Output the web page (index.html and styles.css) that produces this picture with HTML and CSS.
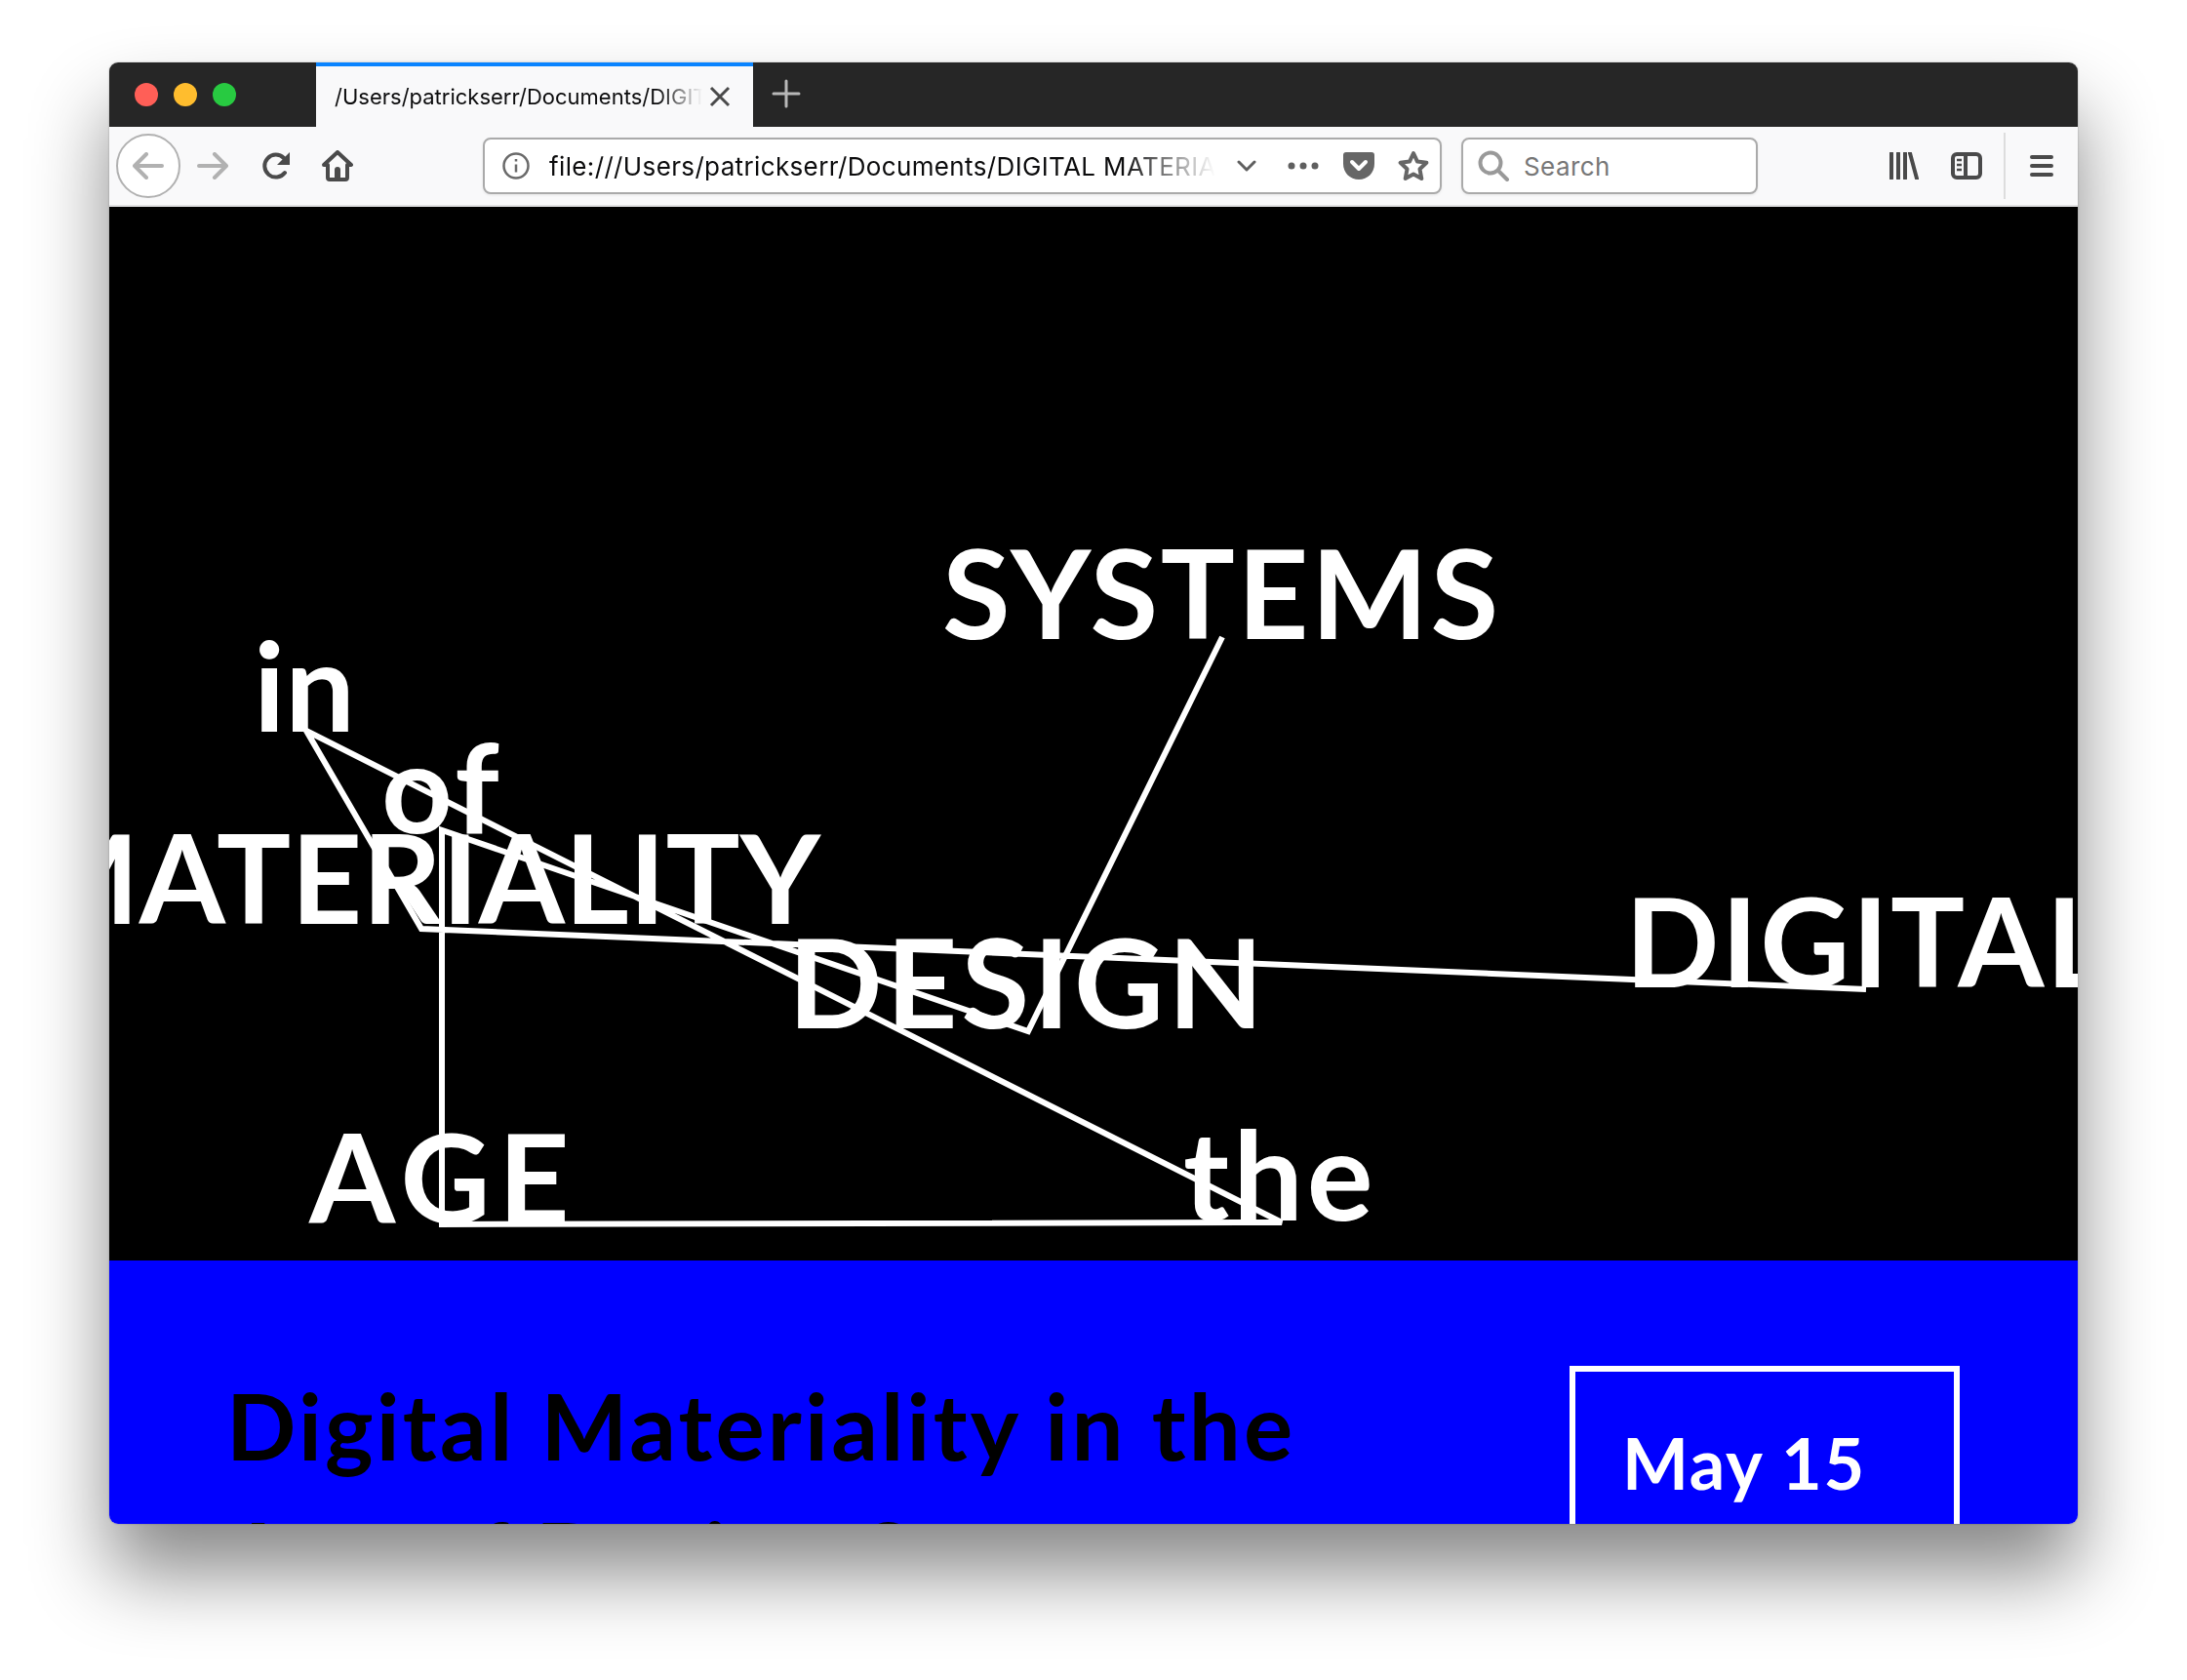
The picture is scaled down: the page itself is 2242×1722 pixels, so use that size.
FILE: index.html
```html
<!DOCTYPE html>
<html lang="en">

<head>
    <meta charset="UTF-8">
    <title>Digital Materiality in the Age of Design Systems</title>
    <link rel="stylesheet" href="styles.css">
</head>

<body>
    <div class="window">
        <div class="tabbar">
            <div class="lights">
                <span class="light red"></span>
                <span class="light yellow"></span>
                <span class="light green"></span>
            </div>
            <div class="tab">
                <span class="tab-title">/Users/patrickserr/Documents/DIGITAL MATERIALITY</span>
                <svg class="tab-close" width="24" height="24" viewBox="0 0 24 24"><path d="M3 3l18 18M21 3L3 21" /></svg>
            </div>
            <svg class="new-tab" width="30" height="30" viewBox="0 0 30 30"><path d="M15 2v26M2 15h26" /></svg>
        </div>

        <div class="toolbar">
            <div class="back">
                <svg width="32" height="28" viewBox="0 0 32 28"><path d="M30 14H3M14 2L2 14l12 12" /></svg>
            </div>
            <svg class="forward" width="32" height="28" viewBox="0 0 32 28"><path d="M2 14h27M18 2l12 12-12 12" /></svg>
            <svg class="reload" width="30" height="28" viewBox="0 0 30 28"><path d="M24 21a11.500 11.500 0 1 1-1-15l3 3" /><path class="solid" d="M29 0v13H16z" /></svg>
            <svg class="home" width="32" height="32" viewBox="0 0 32 32"><path d="M2 15L16 2l14 13h-4v13a2 2 0 0 1-2 2H8a2 2 0 0 1-2-2V15z" /><path class="solid" d="M13 30V20a3 3 0 0 1 6 0v10z" /></svg>

            <div class="urlbar">
                <svg class="info" width="28" height="28" viewBox="0 0 28 28"><circle cx="14" cy="14" r="12.5" /><path d="M14 12.5v8" /><path d="M14 7v2.6" /></svg>
                <span class="url">file:///Users/patrickserr/Documents/DIGITAL MATERIALITY/index.html</span>
                <svg class="chevron" width="20" height="12" viewBox="0 0 20 12"><path d="M2 2l8 8 8-8" /></svg>
                <svg class="dots" width="32" height="8" viewBox="0 0 32 8"><circle cx="4" cy="4" r="3.5" /><circle cx="16" cy="4" r="3.5" /><circle cx="28" cy="4" r="3.5" /></svg>
                <svg class="pocket" width="32" height="28" viewBox="0 0 32 28"><path class="solid" d="M3 0h26a3 3 0 0 1 3 3v9c0 9-7 16-16 16S0 21 0 12V3a3 3 0 0 1 3-3z" /><path d="M9 10l7 7 7-7" /></svg>
                <svg class="star" width="32" height="32" viewBox="0 0 32 32"><path d="M16 3l4 8.6 9.4 1.2-6.9 6.5 1.800 9.700-8.300-4.600-8.300 4.600 1.800-9.700-6.900-6.500 9.400-1.200z" /></svg>
            </div>

            <div class="searchbar">
                <svg class="glass" width="32" height="32" viewBox="0 0 32 32"><circle cx="13" cy="13" r="10.500" /><path d="M21 21l9 9" /></svg>
                <span class="search-text">Search</span>
            </div>

            <svg class="library" width="30" height="28" viewBox="0 0 30 28"><path d="M2 1v26M9 1v26M16 1v26M21 1l7 26" /></svg>
            <svg class="sidebar" width="32" height="28" viewBox="0 0 32 28"><rect x="2" y="2" width="28" height="24" rx="4" /><path d="M15 2v24" /><path class="thin" d="M6 8h5M6 13h5M6 18h5" /></svg>
            <span class="divider"></span>
            <svg class="menu" width="26" height="24" viewBox="0 0 26 24"><path d="M3 3h20M3 12h20M3 21h20" /></svg>
        </div>

        <div class="canvas">
            <svg class="links" width="2018" height="1080" viewBox="0 0 2018 1080">
                <polyline points="1141,441 942,845 341,639 341,1043 1202,1041 202,537 320,740 1801,802" />
            </svg>
            <span class="word word-systems">SYSTEMS</span>
            <span class="word word-in">in</span>
            <span class="word word-of">of</span>
            <span class="word word-materiality">MATERIALITY</span>
            <span class="word word-design">DESIGN</span>
            <span class="word word-digital">DIGITAL</span>
            <span class="word word-age">AGE</span>
            <span class="word word-the">the</span>
        </div>

        <div class="intro">
            <h1>Digital Materiality in the Age of Design Systems</h1>
            <div class="date">May 15</div>
        </div>
    </div>
</body>

</html>
```

FILE: styles.css
```css
* {
    box-sizing: border-box;
}

html,
body {
    margin: 0;
    height: 100%;
    overflow: hidden;
}

body {
    background-color: #fff;
    padding: 64px 112px 160px;
    font-family: "Inter", "Liberation Sans", sans-serif;
}

svg {
    display: block;
    flex: none;
    fill: none;
    stroke: #4a4a4a;
    stroke-width: 4;
    stroke-linecap: round;
    stroke-linejoin: round;
}

svg .solid {
    fill: #4a4a4a;
    stroke: none;
}

.window {
    height: 1498px;
    display: flex;
    flex-direction: column;
    overflow: hidden;
    border-radius: 9px;
    box-shadow: 0 50px 80px rgba(0, 0, 0, .47), 0 0 2px rgba(0, 0, 0, .3);
}

/* tab strip */
.tabbar {
    height: 66px;
    flex: none;
    display: flex;
    align-items: stretch;
    background-color: #262626;
}

.lights {
    width: 212px;
    display: flex;
    align-items: center;
    gap: 16px;
    padding-left: 26px;
}

.light {
    width: 24px;
    height: 24px;
    border-radius: 50%;
}

.red {
    background-color: #ff5f57;
}

.yellow {
    background-color: #ffbd2e;
}

.green {
    background-color: #28ca41;
}

.tab {
    width: 448px;
    display: flex;
    align-items: center;
    padding: 0 22px 0 19px;
    gap: 6px;
    background-color: #f9f9fa;
    border-top: 4px solid #0a84ff;
}

.tab-title {
    flex: 1;
    overflow: hidden;
    white-space: nowrap;
    font-size: 22px;
    color: #0c0c0d;
    -webkit-mask-image: linear-gradient(to right, #000 88%, transparent 100%);
    mask-image: linear-gradient(to right, #000 88%, transparent 100%);
}

.tab-close {
    stroke-width: 3;
    stroke-linecap: butt;
}

.new-tab {
    margin: 17px 0 0 19px;
    stroke: #b8b8b8;
    stroke-width: 3;
}

/* nav bar */
.toolbar {
    height: 82px;
    flex: none;
    display: flex;
    align-items: center;
    padding-left: 7px;
    background-color: #f9f9fa;
    border-bottom: 2px solid #e1e1e2;
}

.back {
    width: 66px;
    height: 66px;
    flex: none;
    display: flex;
    align-items: center;
    justify-content: center;
    background-color: #fff;
    border: 2px solid #b1b1b1;
    border-radius: 50%;
}

.back svg,
.forward {
    stroke: #b1b1b1;
}

.forward {
    margin-left: 17px;
}

.reload {
    margin-left: 34px;
}

.home {
    margin-left: 32px;
}

.urlbar,
.searchbar {
    height: 58px;
    display: flex;
    align-items: center;
    background-color: #fff;
    border: 2px solid #aaa;
    border-radius: 8px;
    box-shadow: 0 1px 3px rgba(0, 0, 0, .08);
}

.urlbar {
    width: 983px;
    margin-left: 133px;
    padding-left: 18px;
}

.info {
    stroke: #6a6a6a;
    stroke-width: 2.5;
    stroke-linecap: butt;
}

.url {
    width: 683px;
    margin-left: 20px;
    overflow: hidden;
    white-space: nowrap;
    font-size: 26px;
    letter-spacing: .36px;
    color: #0c0c0d;
    -webkit-mask-image: linear-gradient(to right, #000 86%, transparent 100%);
    mask-image: linear-gradient(to right, #000 86%, transparent 100%);
}

.chevron {
    margin-left: 22px;
    stroke: #5f5f5f;
    stroke-width: 3;
}

.dots {
    margin-left: 32px;
    fill: #5f5f5f;
    stroke: none;
}

.pocket {
    margin-left: 25px;
}

.pocket .solid {
    fill: #666;
}

.pocket path:last-child {
    stroke: #fff;
}

.star {
    margin-left: 24px;
    stroke: #666;
}

.searchbar {
    width: 304px;
    margin-left: 20px;
    padding-left: 15px;
}

.glass {
    stroke: #999;
}

.search-text {
    margin-left: 15px;
    font-size: 26px;
    letter-spacing: .4px;
    color: #777;
}

.library {
    margin-left: 135px;
}

.sidebar {
    margin-left: 33px;
}

.sidebar .thin {
    stroke-width: 2.5;
    stroke-linecap: butt;
}

.divider {
    width: 2px;
    height: 68px;
    margin-left: 22px;
    background-color: #ddd;
}

.menu {
    margin-left: 24px;
}

/* word graph */
.canvas {
    position: relative;
    height: 1080px;
    flex: none;
    overflow: hidden;
    background-color: #000;
    font-family: "Lato", sans-serif;
}

.links {
    position: absolute;
    left: 0;
    top: 0;
}

.links polyline {
    stroke: #fff;
    stroke-width: 6;
    stroke-linecap: butt;
    stroke-linejoin: miter;
}

.word {
    position: absolute;
    font-size: 127px;
    font-weight: 700;
    line-height: 1;
    white-space: nowrap;
    color: #fff;
}

.word-systems {
    left: 854px;
    top: 331px;
    letter-spacing: 2.5px;
}

.word-in {
    left: 148px;
    top: 426px;
}

.word-of {
    left: 279px;
    top: 530px;
    letter-spacing: 4px;
}

.word-materiality {
    right: 1289px;
    top: 623px;
}

.word-design {
    left: 696px;
    top: 730px;
    letter-spacing: 4px;
}

.word-digital {
    left: 1554px;
    top: 688px;
    letter-spacing: 2px;
}

.word-age {
    left: 205px;
    top: 930px;
    letter-spacing: 8px;
}

.word-the {
    left: 1101px;
    top: 927px;
    letter-spacing: 4px;
}

/* blue intro block */
.intro {
    flex: 1;
    min-height: 0;
    display: flex;
    justify-content: space-between;
    align-items: flex-start;
    padding: 108px 121px 0 120px;
    background-color: #00f;
    font-family: "Lato", sans-serif;
}

.intro h1 {
    width: 1200px;
    margin: -5px 0 0;
    font-size: 94px;
    font-weight: 700;
    line-height: 132px;
    letter-spacing: 3.2px;
    color: #000;
}

.date {
    width: 400px;
    height: 300px;
    padding: 50px 48px;
    border: 6px solid #fff;
    font-size: 72px;
    font-weight: 700;
    letter-spacing: 1.7px;
    color: #fff;
}
```
